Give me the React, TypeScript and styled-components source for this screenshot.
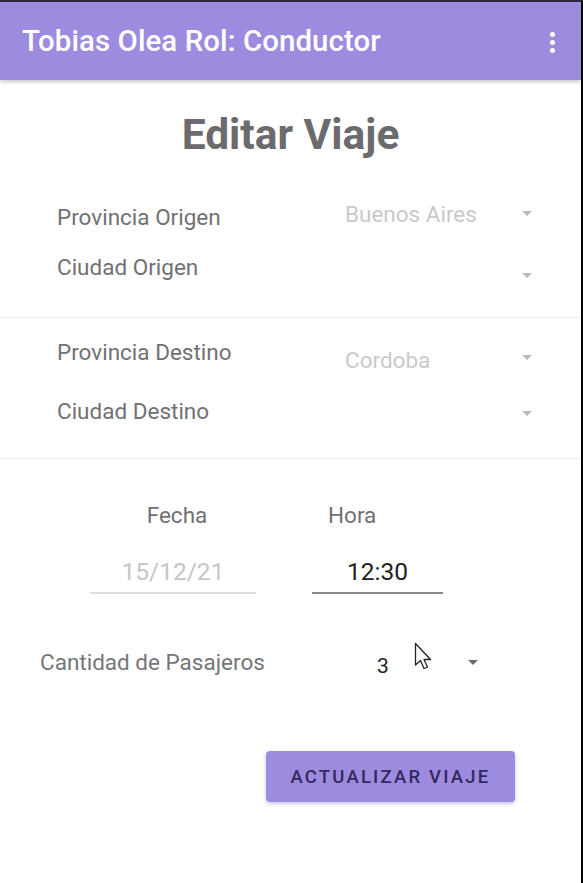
import React from "react";
import styled, { createGlobalStyle } from "styled-components";

const GlobalStyle = createGlobalStyle`
  html, body {
    margin: 0;
    padding: 0;
    background: #fff;
  }
  * {
    box-sizing: border-box;
  }
`;

// ---------------------
// Layout
// ---------------------
const Screen = styled.div`
  position: relative;
  width: 583px;
  height: 883px;
  background: #fff;
  border-top: 2px solid #2c2745;
  border-right: 2px solid #000;
  font-family: Roboto, "Noto Sans", Arial, sans-serif;
  overflow: hidden;
`;

const AppBar = styled.header`
  height: 78px;
  background: #9d8be0;
  display: flex;
  align-items: center;
  justify-content: space-between;
  padding: 0 26px 0 22px;
  box-shadow: 0 2px 4px rgba(0, 0, 0, 0.22);
  position: relative;
  z-index: 1;
`;

const AppTitle = styled.h1`
  margin: 0;
  color: #fff;
  font-size: 29.4px;
  font-weight: 500;
  letter-spacing: 0.1px;
`;

const MenuDots = styled.div`
  display: flex;
  flex-direction: column;
  gap: 3px;
  padding-top: 2px;

  span {
    width: 5px;
    height: 5px;
    border-radius: 50%;
    background: #fff;
  }
`;

const Title = styled.h2`
  margin: 31px 0 0;
  text-align: center;
  font-size: 42.5px;
  line-height: 48px;
  font-weight: 700;
  color: #6b6b6d;
`;

const Section = styled.section<{ $top: number; $bottom: number; $gap: number }>`
  display: flex;
  flex-direction: column;
  gap: ${(p) => p.$gap}px;
  padding: ${(p) => p.$top}px 0 ${(p) => p.$bottom}px;
  border-bottom: 1px solid #ececee;
`;

const SpinnerRow = styled.div<{ $offset?: number }>`
  height: 48px;
  margin-top: ${(p) => p.$offset ?? 0}px;
  display: grid;
  grid-template-columns: 288px 1fr 10px;
  align-items: center;
  padding: 0 49px 0 57px;
`;

const Label = styled.span`
  font-size: 22.5px;
  color: #717174;
`;

const Value = styled.span<{ $shift: number }>`
  font-size: 22.5px;
  color: #c9c9cc;
  transform: translateY(${(p) => p.$shift}px);
`;

const Arrow = styled.span<{ $shift: number; $dark?: boolean }>`
  width: 0;
  height: 0;
  border-left: 5px solid transparent;
  border-right: 5px solid transparent;
  border-top: 5px solid ${(p) => (p.$dark ? "#6e6e70" : "#b9b9bc")};
  transform: translateY(${(p) => p.$shift}px);
`;

const DateTime = styled.div`
  display: flex;
  padding: 42px 0 0 90px;
  gap: 56px;
`;

const Field = styled.div<{ $width: number }>`
  width: ${(p) => p.$width}px;
  display: flex;
  flex-direction: column;
`;

const FieldLabel = styled.span<{ $align: "center" | "left" }>`
  font-size: 22.5px;
  color: #717174;
  text-align: ${(p) => p.$align};
  padding-left: ${(p) => (p.$align === "left" ? 16 : 8)}px;
  line-height: 28px;
`;

const FieldInput = styled.div<{ $filled?: boolean }>`
  margin-top: 13px;
  height: 52px;
  display: flex;
  align-items: flex-end;
  justify-content: center;
  padding-bottom: 6px;
  font-size: 24.5px;
  line-height: 28px;
  color: ${(p) => (p.$filled ? "#222" : "#c6c6c9")};
  border-bottom: 2px solid ${(p) => (p.$filled ? "#8a8a8d" : "#dcdcde")};
`;

const PassengerRow = styled.div`
  margin-top: 48px;
  display: flex;
  align-items: center;
  padding-left: 40px;
  height: 40px;
`;

const PassengerLabel = styled(Label)`
  width: 337px;
  color: #767679;
`;

const PassengerValue = styled.span`
  font-size: 21px;
  color: #222;
  width: 91px;
  transform: translateY(4px);
`;

const Actions = styled.div`
  display: flex;
  justify-content: flex-end;
  padding: 69px 66px 0 0;
`;

const PrimaryButton = styled.button`
  width: 249px;
  height: 51px;
  border: none;
  border-radius: 4px;
  background: #9d8be0;
  color: #35285f;
  font-family: Roboto, "Noto Sans", Arial, sans-serif;
  font-size: 18.5px;
  font-weight: 500;
  letter-spacing: 2.2px;
  box-shadow: 0 2px 4px rgba(80, 60, 160, 0.3);
`;

const Cursor = styled.svg`
  position: absolute;
  left: 414px;
  top: 640px;
`;

export default function App() {
  return (
    <Screen>
      <GlobalStyle />
      <AppBar>
        <AppTitle>Tobias Olea Rol: Conductor</AppTitle>
        <MenuDots>
          <span />
          <span />
          <span />
        </MenuDots>
      </AppBar>

      <Section $top={0} $bottom={26} $gap={2}>
        <Title>Editar Viaje</Title>
        <SpinnerRow $offset={32}>
          <Label>Provincia Origen</Label>
          <Value $shift={-3}>Buenos Aires</Value>
          <Arrow $shift={-4} />
        </SpinnerRow>
        <SpinnerRow>
          <Label>Ciudad Origen</Label>
          <Value $shift={0} />
          <Arrow $shift={8} />
        </SpinnerRow>
      </Section>

      <Section $top={10} $bottom={23} $gap={11}>
        <SpinnerRow>
          <Label>Provincia Destino</Label>
          <Value $shift={8}>Cordoba</Value>
          <Arrow $shift={5} />
        </SpinnerRow>
        <SpinnerRow>
          <Label>Ciudad Destino</Label>
          <Value $shift={0} />
          <Arrow $shift={2} />
        </SpinnerRow>
      </Section>

      <DateTime>
        <Field $width={166}>
          <FieldLabel $align="center">Fecha</FieldLabel>
          <FieldInput>15/12/21</FieldInput>
        </Field>
        <Field $width={131}>
          <FieldLabel $align="left">Hora</FieldLabel>
          <FieldInput $filled>12:30</FieldInput>
        </Field>
      </DateTime>

      <PassengerRow>
        <PassengerLabel>Cantidad de Pasajeros</PassengerLabel>
        <PassengerValue>3</PassengerValue>
        <Arrow $shift={0} $dark />
      </PassengerRow>

      <Actions>
        <PrimaryButton>ACTUALIZAR VIAJE</PrimaryButton>
      </Actions>

      <Cursor width="20" height="30" viewBox="0 0 20 30">
        <path
          d="M1.5 1.5 L1.5 23 L6.5 18.5 L10 26.5 L13.5 25 L10 17.5 L16.5 17.5 Z"
          fill="#fff"
          stroke="#222"
          strokeWidth="1.3"
          strokeLinejoin="round"
        />
      </Cursor>
    </Screen>
  );
}
